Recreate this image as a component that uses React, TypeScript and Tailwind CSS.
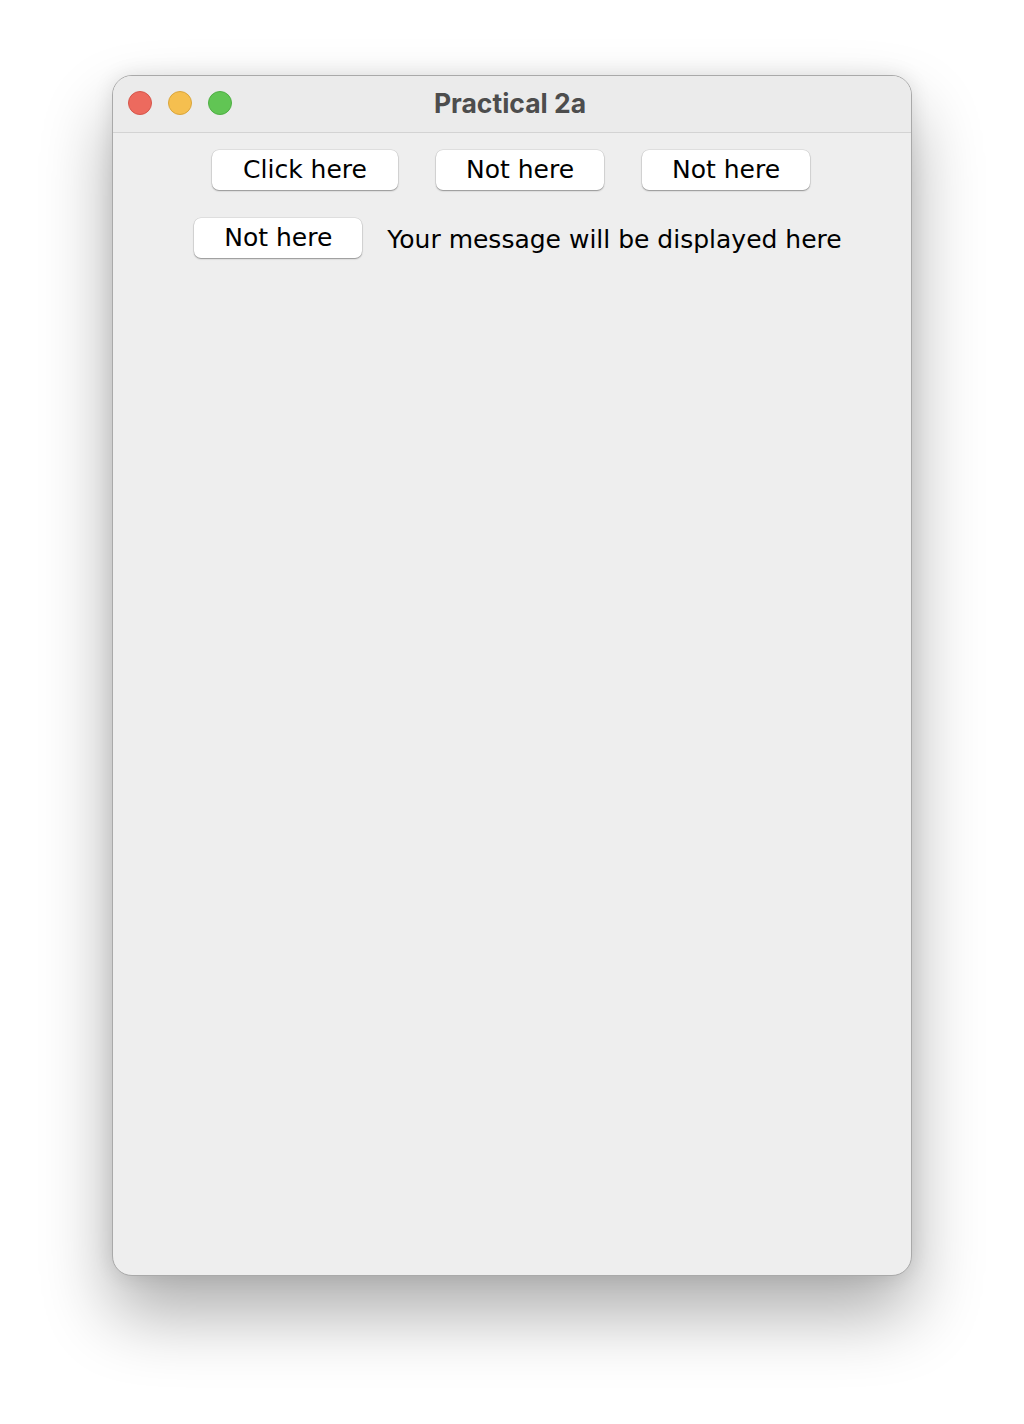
import React from 'react';

const MacButton: React.FC<{ children: React.ReactNode; className?: string }> = ({ children, className }) => (
  <button
    className={`h-[40px] flex items-center justify-center bg-white rounded-[7px] text-black text-[25px] leading-none pb-[2px] shadow-[0_1px_1.5px_rgba(0,0,0,0.35),0_0_0_0.5px_rgba(0,0,0,0.12)] ${className}`}
    style={{ fontFamily: '"DejaVu Sans", sans-serif' }}
  >
    {children}
  </button>
);

const App: React.FC = () => {
  return (
    <div className="w-[1024px] h-[1424px] bg-white flex justify-center pt-[75px]">
      <div className="w-[800px] h-[1201px] flex flex-col bg-[#eeeeee] rounded-[20px] border border-[#a9a9a9] shadow-[0_38px_70px_rgba(0,0,0,0.32),0_0_20px_rgba(0,0,0,0.1)] overflow-hidden">
        {/* title bar */}
        <div className="relative h-[57px] shrink-0 flex items-center justify-center bg-[#ebebeb] border-b border-[#d3d3d3]">
          <div className="absolute left-[15px] top-[15px] flex gap-[16px]">
            <span className="w-[24px] h-[24px] rounded-full bg-[#ed6a5e] border border-[#d5564b]" />
            <span className="w-[24px] h-[24px] rounded-full bg-[#f5bf4f] border border-[#d9a53c]" />
            <span className="w-[24px] h-[24px] rounded-full bg-[#61c554] border border-[#4fae44]" />
          </div>
          <span
            className="text-[26.5px] font-bold text-[#4d4d4d] -ml-[4px]"
            style={{ fontFamily: 'Inter, "Liberation Sans", sans-serif' }}
          >
            Practical 2a
          </span>
        </div>

        {/* content */}
        <div className="flex flex-col pt-[17px] gap-[28px]">
          <div className="flex justify-center gap-[38px] -ml-[2px]">
            <MacButton className="w-[186px]">Click here</MacButton>
            <MacButton className="w-[168px]">Not here</MacButton>
            <MacButton className="w-[168px]">Not here</MacButton>
          </div>
          <div className="flex items-center justify-center gap-[25px] pl-[12px]">
            <MacButton className="w-[168px]">Not here</MacButton>
            <span
              className="text-[25px] text-black leading-none pt-[2px]"
              style={{ fontFamily: '"DejaVu Sans", sans-serif' }}
            >
              Your message will be displayed here
            </span>
          </div>
        </div>
      </div>
    </div>
  );
};

export default App;
